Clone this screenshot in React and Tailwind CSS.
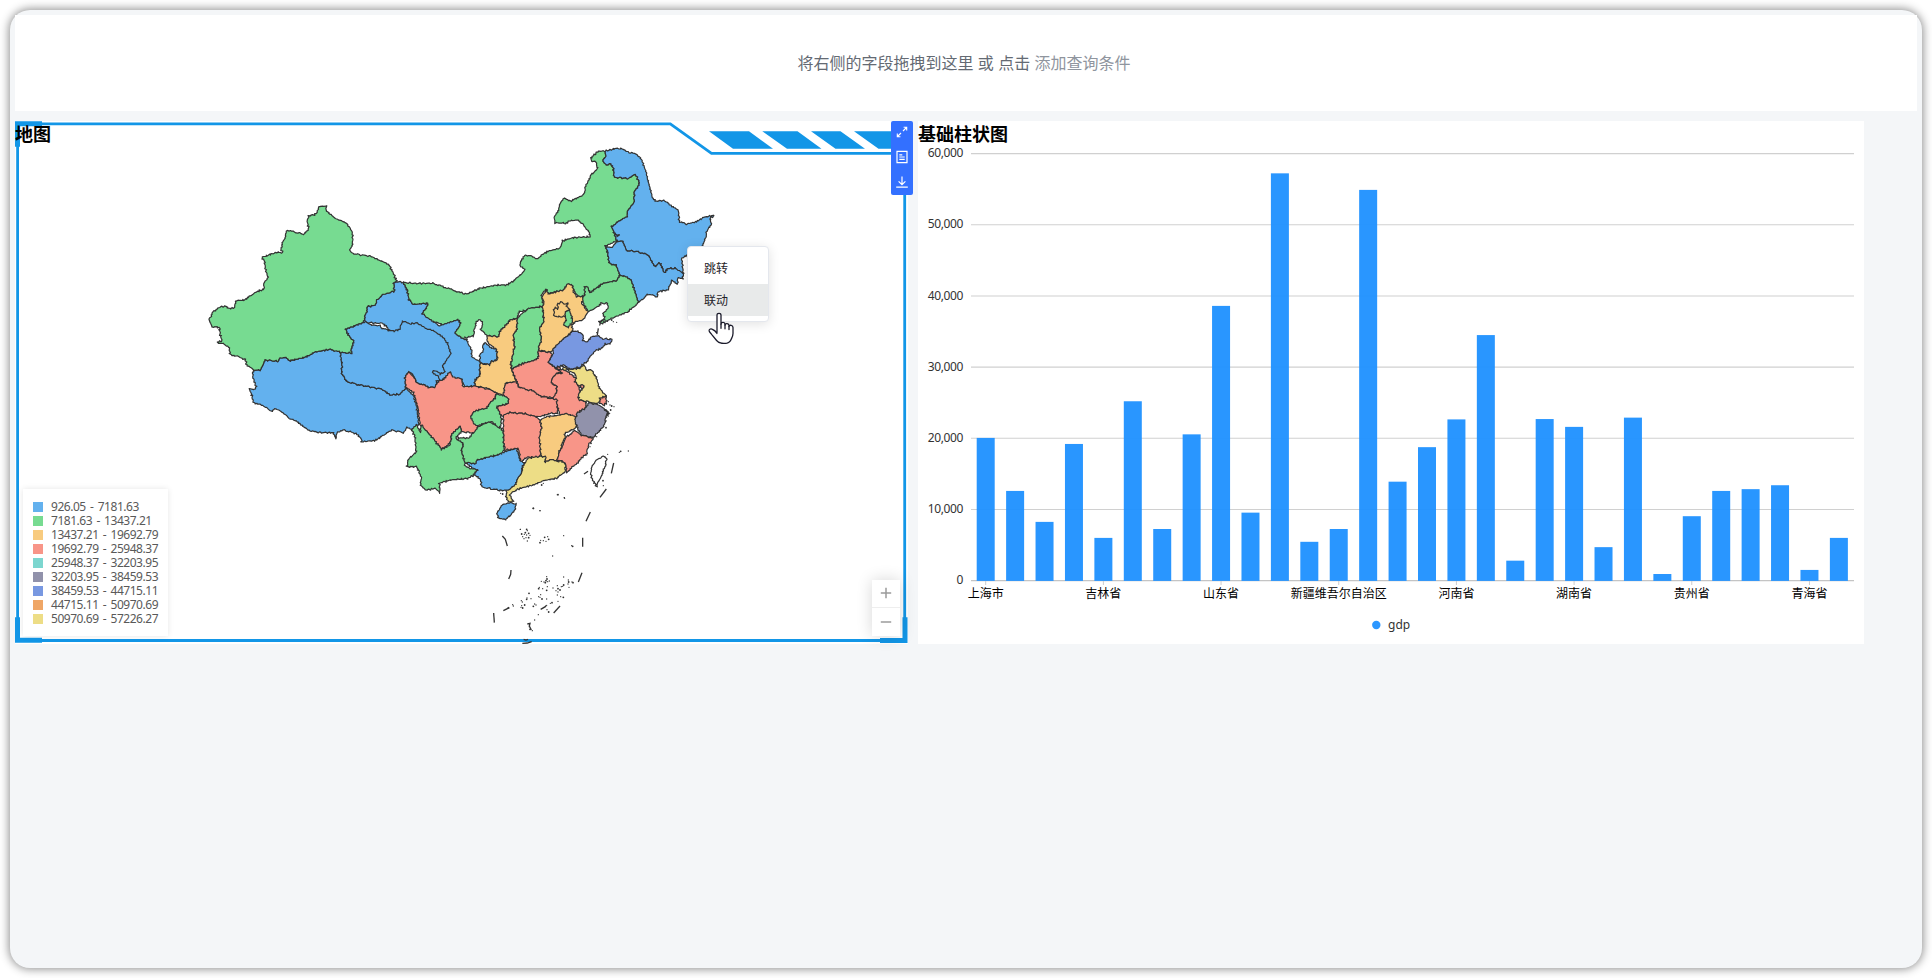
import React from "react";

/* ---------- map geometry ---------- */

const seg = (ox, oy) => (text) =>
  text.trim().split(/\s+/).map((p) => {
    const [x, y] = p.split(",").map(Number);
    return [ox + x / 3, oy + y / 3];
  });

const west = seg(200, 190);
const mid = seg(400, 270);
const north = seg(520, 140);
const south = seg(460, 330);
const sea = seg(470, 480);

// Small position-dependent offset that gives borders their natural roughness.
const rough = ([x, y]) => [
  x + 0.5 * Math.sin(x * 1.9 + y * 1.3) + 0.4 * Math.sin(y * 2.7 - x * 0.8),
  y + 0.5 * Math.sin(x * 1.4 - y * 2.1) + 0.4 * Math.cos(x * 2.9 + y * 0.7),
];

const outline = (pts) => {
  const out = [];
  pts.forEach((a, i) => {
    const b = pts[(i + 1) % pts.length];
    const n = Math.max(1, Math.round(Math.hypot(b[0] - a[0], b[1] - a[1]) / 1.3));
    for (let k = 0; k < n; k++) {
      const q = rough([a[0] + ((b[0] - a[0]) * k) / n, a[1] + ((b[1] - a[1]) * k) / n]);
      out.push(q[0].toFixed(1) + "," + q[1].toFixed(1));
    }
  });
  return out.join(" ");
};

const BLUE = "#63b1ee";
const GREEN = "#77db91";
const ORANGE = "#f8cb7f";
const RED = "#f89588";
const SLATE = "#9192ab";
const INDIGO = "#7898e1";
const YELLOW = "#eddd86";

const regions = [
  [BLUE, [
    ...west("583,302 581,280 590,275 610,277 625,310 627,330 640,343 680,338 683,350 668,370 690,385 720,408 740,390 775,388"),
    ...mid("181,160 165,190 185,205 200,208 205,222 215,240 215,262 240,272 240,295 238,320 225,330 225,348 195,352 185,330 155,322 150,305 135,325 110,345 90,320 -50,160"),
    ...west("490,398 503,350 525,345 530,330 550,313 570,308"),
  ]],
  [GREEN, [
    ...west("610,277 640,280 700,280 740,293 780,308"),
    ...mid("200,72 240,55 290,45 320,45 345,30 375,0"),
    ...north("0,375 10,347 30,347 50,357 80,335 118,325 128,302 160,293 210,290 208,278 190,255 175,240 150,242 140,250 105,248 103,235 130,173 150,184 190,165 200,130 213,105 232,85 228,65 215,63 213,55 235,33 255,33 258,50 248,62 260,75 272,70 280,85 283,112 325,115 345,103 358,125 355,135 343,160 342,190 325,210 320,235 302,240 275,260 285,285 290,303 256,318 262,335 268,370 288,375 300,405 290,422 250,430 210,458 200,440 195,465 185,478 165,460 155,433 140,435 130,450 80,462 78,448 65,465 70,498 60,500 20,510"),
    ...mid("360,125 350,145 330,150 300,185 295,200 262,197 242,180 248,160 240,148 230,155 225,170 220,198 185,205 165,190 181,160 175,148 155,155 125,165 85,145 68,130 80,115 83,100 40,103 27,90 22,60"),
  ]],
  [BLUE, west("160,540 180,540 197,510 235,514 240,504 260,503 270,512 320,500 345,486 390,478 425,487 426,520 425,550 440,574 480,585 545,597 570,615 600,612 618,595 640,615 650,650 656,700 640,718 620,713 612,728 575,720 525,752 485,755 482,742 468,730 428,720 412,728 407,745 400,728 362,728 342,725 320,718 300,700 285,690 270,688 240,660 222,657 215,665 200,652 160,636 155,615 148,597 164,598 168,588 158,560")],
  [GREEN, west("590,273 580,250 567,225 540,212 518,200 455,190 450,180 458,160 457,125 440,100 425,92 408,88 398,80 385,66 378,62 380,48 355,50 352,68 342,74 325,78 322,95 326,120 310,132 285,127 262,120 248,160 242,178 249,188 230,187 185,202 193,210 197,240 204,262 193,275 191,297 165,308 133,330 110,332 100,355 82,355 80,348 62,350 38,366 32,380 26,386 36,410 58,412 60,430 66,452 52,457 70,462 88,475 90,492 136,508 140,525 160,540 180,540 197,510 235,514 240,504 260,503 270,512 320,500 345,486 390,478 420,487 455,490 453,475 463,455 445,435 437,418 490,398 503,350 525,345 530,330 550,313 570,308 583,302 581,280")],
  [BLUE, west("437,418 490,398 500,395 515,405 540,407 545,415 580,424 600,418 607,393 630,402 652,398 680,415 720,433 742,458 752,490 740,512 728,530 735,545 722,552 712,543 700,543 698,550 715,560 722,575 710,570 708,592 690,592 650,578 640,556 628,547 615,560 618,595 600,612 570,615 545,597 480,585 440,574 425,550 426,520 420,487 455,490 453,475 463,455 445,435")],
  [BLUE, mid("240,278 240,262 238,255 250,245 248,225 256,218 270,230 290,240 292,270 272,275 270,285")],
  [BLUE, north("255,33 290,25 308,27 330,38 350,42 365,60 378,95 385,125 398,175 410,183 435,182 455,200 475,210 478,245 500,252 530,245 550,232 583,226 570,235 575,255 562,268 555,300 545,320 500,345 485,356 490,400 480,402 465,385 445,385 432,398 420,368 405,380 395,365 385,345 350,335 320,332 308,305 290,303 285,285 275,260 302,240 320,230 325,210 342,190 343,160 355,135 358,125 345,103 325,115 283,112 280,85 272,70 260,75 248,62 258,50")],
  [BLUE, north("256,318 275,322 290,303 308,305 320,332 350,335 385,345 395,365 405,380 420,368 432,398 445,385 465,385 490,402 488,418 474,412 472,435 455,418 445,450 415,455 412,470 385,462 370,475 355,488 345,455 332,418 318,412 300,405 288,375 268,370 262,335")],
  [GREEN, north("300,405 318,412 332,418 345,455 355,488 325,515 300,525 275,535 240,553 238,545 255,535 248,520 265,505 262,490 245,490 225,505 205,515 190,490 185,478 195,465 193,440 203,442 210,458 250,430 290,422")],
  [GREEN, mid("350,145 370,128 385,115 410,112 432,110 430,130 432,155 418,175 425,205 415,240 415,265 400,272 370,280 335,296 332,280 343,230 340,195 350,175")],
  [ORANGE, mid("425,80 440,58 445,72 490,60 500,42 518,45 520,65 530,80 550,78 545,100 563,125 548,150 525,155 515,165 518,180 500,200 485,210 460,240 450,247 415,240 425,205 418,175 432,155 428,110 432,95")],
  [ORANGE, mid("462,125 464,112 474,116 472,104 485,95 494,102 505,100 500,110 508,118 500,125 495,140 475,140 463,138")],
  [GREEN, mid("495,135 498,125 508,120 515,140 518,158 505,172 490,162 498,150")],
  [ORANGE, mid("262,197 295,200 300,185 330,150 352,145 350,175 340,195 343,230 332,285 335,300 350,335 315,340 318,355 310,378 290,368 262,355 225,348 225,330 240,318 240,280 270,285 272,275 292,270 290,240 270,225 260,210")],
  [RED, mid("415,242 450,247 458,255 445,280 462,290 480,292 485,305 470,310 455,325 460,345 470,350 468,385 420,378 400,362 360,358 350,335 335,297 370,280 400,272 415,265")],
  [RED, mid("465,295 490,300 505,305 530,325 535,345 540,365 538,385 560,398 555,415 530,430 528,445 500,435 480,435 470,400 458,385 470,370 470,350 455,340 455,325 470,310 488,310")],
  [YELLOW, mid("487,288 510,298 540,295 552,285 560,300 575,300 590,325 598,355 617,375 618,385 605,385 590,402 565,395 538,390 535,380 540,365 552,350 535,345 525,335 530,325 523,308 505,300 490,300")],
  [RED, mid("541,346 549,343 553,352 546,357 540,353")],
  [INDIGO, mid("460,238 485,210 500,200 518,182 540,187 550,195 548,210 560,215 575,200 595,197 610,206 635,208 630,222 615,222 605,235 590,240 570,258 560,275 548,285 540,292 510,298 490,285 470,292 445,278 458,258")],
  [RED, mid("600,385 617,378 620,400 612,405 600,400")],
  [RED, mid("315,340 350,335 355,350 380,360 400,362 420,378 450,385 470,388 473,430 450,430 420,440 405,440 380,432 360,430 330,428 310,440 290,425 290,410 325,400 325,385 310,378")],
  [RED, mid("310,435 330,428 360,430 380,432 405,440 420,450 425,475 420,500 422,555 408,565 385,560 362,575 355,535 315,540 310,510 310,480")],
  [ORANGE, mid("420,450 440,440 480,435 500,430 525,440 532,460 525,475 495,490 495,505 485,525 470,575 455,570 432,577 422,550 418,500 425,475")],
  [SLATE, mid("565,398 600,405 612,415 625,430 618,440 612,470 590,490 580,503 545,495 535,480 525,455 530,430 555,415")],
  [RED, mid("525,480 545,495 580,505 565,525 560,550 530,580 500,607 495,578 470,570 485,530 500,500 515,490")],
  [YELLOW, mid("405,560 422,560 440,560 432,577 455,568 470,575 485,572 497,585 495,605 470,625 430,632 400,645 360,655 340,665 330,675 340,695 325,695 318,680 320,660 345,645 362,610 375,578 385,565")],
  [BLUE, mid("195,578 210,578 225,582 230,570 270,560 300,552 315,545 350,535 362,575 372,578 362,610 345,645 325,660 305,662 265,655 245,650 242,630 220,612 235,600 210,590")],
  [RED, mid("15,320 25,307 40,318 50,338 90,352 105,352 115,335 135,325 150,305 158,320 185,328 190,350 225,348 262,357 290,368 285,385 270,400 262,415 222,425 212,440 235,465 228,490 185,485 180,468 155,495 150,520 125,538 110,522 95,500 75,480 60,465 55,420 45,380 38,365 18,355")],
  [GREEN, mid("35,480 50,465 60,485 65,465 80,485 95,500 125,538 150,525 155,495 180,468 185,485 168,505 190,515 185,545 195,570 195,590 228,600 220,615 205,625 150,630 118,640 120,668 105,655 80,660 60,645 65,625 50,590 20,590 25,570 48,545 45,500")],
  [GREEN, mid("195,578 185,545 190,520 170,510 175,503 205,505 225,485 235,470 265,455 300,470 310,485 312,540 300,552 270,560 230,570 225,582 210,578")],
  [GREEN, mid("290,370 325,385 325,400 290,410 300,430 305,450 300,475 275,455 250,460 235,468 222,462 212,440 222,425 240,418 262,415 270,400 285,385")],
  [BLUE, south("110,548 125,525 148,518 170,522 165,538 150,558 135,570 115,562")],
  ["#ffffff", south("392,425 398,408 410,390 430,378 440,385 435,410 425,435 415,455 410,470 403,458 395,445")],
];

const strokes = [
  sea("97,168 106,178 112,198"), sea("123,270 122,283 116,297"), sea("71,399 73,428"),
  sea("361,96 348,124"), sea("338,173 338,200"), sea("336,278 325,306"),
  sea("270,378 251,399"), sea("409,27 390,52"), south("461,399 454,430"),
  sea("161,478 168,480 174,478"), sea("157,490 172,489 185,485"), sea("172,432 180,430 178,438 184,450"),
  north("238,548 250,540 256,538"), north("232,585 235,565"), south("372,432 384,424"),
  sea("212,388 226,380 229,376"), sea("100,392 112,386 116,382"), mid("612,420 624,425 620,435 628,430"),
];

const dots = [
  ...sea("264,44 283,53 284,55 190,85 210,92 151,148 155,162 158,170 163,163 166,158 170,165 172,152 176,160 180,166 168,173 176,173 172,183 162,176 210,188 212,181 220,182 224,172 228,184 233,170 236,178 281,167 305,197 308,199 248,228"),
  ...sea("230,290 231,297 214,304 222,306 228,302 233,305 238,303 226,308 281,291 295,300 296,306 294,312 306,306 309,308 297,322 208,322 206,326 218,326 232,320 230,331 249,324 262,317 264,326 258,332 264,336 270,330 274,320 278,319 281,315 262,345 272,350 280,352 206,350 210,352 216,357 230,357 212,344 177,340 171,354 183,356 170,358 154,362 157,366 164,375 155,377 153,382 158,384 128,374 130,378 116,384 194,372 198,375 190,379 230,376 241,370 246,368 264,364 231,389 236,396 205,404 194,420 180,448 187,452 178,440"),
  ...north("275,540 280,545 290,547 262,543 230,578"),
  ...south("478,367 482,364 505,363 443,373 429,452 430,467 122,490 128,492 292,494 313,503 220,535 240,542 181,598 200,598 445,215 450,225 455,228 462,230 446,248 442,244 449,250 445,258 452,240 440,262 438,272 438,293 405,318 410,320 393,340 390,350 380,375 245,465 250,460"),
];

function ProvinceMap() {
  return (
    <svg className="absolute inset-0 h-full w-full overflow-visible" viewBox="15 121 893 523">
      <g stroke="#333" strokeWidth="1.2" strokeLinejoin="round">
        {regions.map(([fill, pts], i) => (
          <polygon key={i} fill={fill} points={outline(pts)} />
        ))}
      </g>
      <polyline points={north("285,282 292,286 299,284 290,290").join(" ")} fill="none" stroke="#333" strokeWidth="1.6" />
      <g fill="none" stroke="#333" strokeWidth="1.3">
        {strokes.map((pts, i) => (
          <polyline key={i} points={pts.join(" ")} />
        ))}
      </g>
      <g fill="#333">
        {dots.map(([x, y], i) => (
          <circle key={i} cx={x} cy={y} r={i % 3 === 0 ? 0.9 : 0.65} />
        ))}
      </g>
    </svg>
  );
}

function Frame() {
  return (
    <svg className="pointer-events-none absolute inset-0 h-full w-full" viewBox="15 121 893 523">
      <g fill="none" stroke="#1296e7" strokeWidth="2.8">
        <path d="M17.6 123.9H670.3L711.5 153.4H904.7V640.5H17.6Z" />
        <path strokeWidth="5" d="M17.5 146.7V123.7H42M17.5 617.3V640.3H42M880 640.4H905V617.3" />
      </g>
      <path
        fill="#1296e7"
        d="M709 131.2H749L773 148.8H733ZM762.3 131.2H797.5L821.5 148.8H787ZM811 131.2H840.5L865 148.8H835.5ZM854 131.2H908V148.8H878.5Z"
      />
    </svg>
  );
}

/* ---------- map panel ---------- */

const ranges = [
  [BLUE, "926.05 - 7181.63"],
  [GREEN, "7181.63 - 13437.21"],
  [ORANGE, "13437.21 - 19692.79"],
  [RED, "19692.79 - 25948.37"],
  ["#7cd6cf", "25948.37 - 32203.95"],
  [SLATE, "32203.95 - 38459.53"],
  [INDIGO, "38459.53 - 44715.11"],
  ["#efa666", "44715.11 - 50970.69"],
  [YELLOW, "50970.69 - 57226.27"],
];

function Legend() {
  return (
    <ul className="absolute bottom-2 left-2 flex h-[147px] w-[145px] flex-col justify-center bg-white pl-2.5 shadow-[0_0_6px_rgba(0,0,0,0.1)]">
      {ranges.map(([color, label]) => (
        <li key={label} className="flex h-3.5 items-center gap-2">
          <span className="h-2.5 w-2.5" style={{ backgroundColor: color }} />
          <span className="font-['Noto_Sans','Noto_Sans_CJK_SC',sans-serif] text-[12px] leading-[14px] tracking-[-0.46px] [word-spacing:1.6px] whitespace-nowrap text-[#595959]">
            {label}
          </span>
        </li>
      ))}
    </ul>
  );
}

function ZoomControl() {
  return (
    <div className="absolute right-2 bottom-2 flex w-7 flex-col gap-px bg-[#eeeeee] shadow-[0_0_16px_rgba(0,0,0,0.16)]">
      <button className="flex h-[27px] items-center justify-center bg-white pb-px">
        <svg className="h-3 w-3" viewBox="0 0 12 12" stroke="#9b9b9b" strokeWidth="1.5">
          <path d="M6 .8v10.4M.8 6h10.4" />
        </svg>
      </button>
      <button className="flex h-7 items-center justify-center bg-white">
        <svg className="h-3 w-3" viewBox="0 0 12 12" stroke="#9b9b9b" strokeWidth="1.5">
          <path d="M.8 6h10.4" />
        </svg>
      </button>
    </div>
  );
}

function ContextMenu() {
  return (
    <div className="absolute top-[125px] left-[672px] w-[82px] rounded border border-[#e4e7ed] bg-white py-[5px] text-[12px] leading-[31px] text-[#1f2329] shadow-[0_2px_12px_rgba(0,0,0,0.12)]">
      <div className="h-8 px-4">跳转</div>
      <div className="h-8 bg-[#e8eaea] px-4">联动</div>
    </div>
  );
}

function HandCursor() {
  return (
    <svg className="absolute top-[191px] left-[693px] h-8 w-7" viewBox="0 0 28 32" fill="#fff" stroke="#1b1b2b" strokeWidth="1.3" strokeLinejoin="round" strokeLinecap="round">
      <path d="M9 20.5V3.2C9 .8 13 .8 13 3.2V12.2C13.2 9.8 17 10 17 12.2V13C17.4 11 21 11.4 21 13.6V14.4C21.6 12.6 25 13 25 15.4V21.5C25 24 24 25.5 23.2 27.2C22 30.5 20 31.5 16 31.5C12 31.5 10.2 30.5 8.6 28.5L3.8 22.6C3 21.5 1.6 20.6 1.2 19C.9 17.5 2.4 16.4 4 17.2C5.5 17.8 7.6 19 9 21.5" />
      <path fill="none" d="M13 12.2V16.3M17 13V16.8M21 14.4V17.6" />
    </svg>
  );
}

function Toolbar() {
  return (
    <div className="absolute top-0 -right-[5px] flex h-[74px] w-[22px] flex-col items-center rounded-[2px] bg-[#3370ff]">
      <button className="flex h-[22px] items-center justify-center">
        <svg className="h-3 w-3" viewBox="0 0 12 12" fill="none" stroke="#fff" strokeWidth="1.1">
          <path d="M7.6 1.3h3.1v3.1M10.5 1.5L7 5M4.4 10.7H1.3V7.6M1.5 10.5L5 7" />
        </svg>
      </button>
      <button className="flex h-7 items-center justify-center">
        <svg className="h-[14px] w-3" viewBox="0 0 12 14" fill="none" stroke="#fff" strokeWidth="1.2">
          <path d="M1 1.3h10v11.4H1zM3.3 4.8h3M3.3 7h5.4M3.3 9.3h5.4" />
        </svg>
      </button>
      <button className="flex h-[22px] items-center justify-center">
        <svg className="h-3 w-3" viewBox="0 0 12 12" fill="none" stroke="#fff" strokeWidth="1.2">
          <path d="M6 .5v8M2.6 5.4L6 8.7l3.4-3.3M.2 11.1h11.6" />
        </svg>
      </button>
    </div>
  );
}

function MapPanel() {
  return (
    <section className="relative h-[523px] w-[893px] bg-white">
      <Frame />
      <h2 className="relative text-[18px] leading-[25px] font-bold text-black">地图</h2>
      <ProvinceMap />
      <Legend />
      <ZoomControl />
      <Toolbar />
      <ContextMenu />
      <HandCursor />
    </section>
  );
}

/* ---------- chart panel ---------- */

const gdp = [
  20050, 12600, 8250, 19200, 6000, 25200, 7250, 20550, 38600, 9550, 57226, 5450, 7250, 54900, 13900,
  18750, 22650, 34500, 2800, 22700, 21600, 4700, 22900, 926, 9050, 12600, 12850, 13400, 1500, 6000,
];
const ticks = [60000, 50000, 40000, 30000, 20000, 10000, 0];
const names = ["上海市", "吉林省", "山东省", "新疆维吾尔自治区", "河南省", "湖南省", "贵州省", "青海省"];

function BarChart() {
  const y = (v) => 459.6 - (v * 427) / 60000;
  const x = (i) => 67.7 + i * 29.42;
  return (
    <svg className="absolute inset-0 h-full w-full font-['Noto_Sans','Noto_Sans_CJK_SC',sans-serif]" viewBox="0 0 946 523">
      {ticks.map((t) => (
        <g key={t}>
          <path d={`M53 ${y(t)}H936`} stroke={t ? "#d0d0d0" : "#c4c4c4"} strokeWidth="1.1" />
          <text x="45" y={y(t) + 3.6} textAnchor="end" fontSize="12" letterSpacing="-0.4" fill="#333">
            {t.toLocaleString("en-US")}
          </text>
        </g>
      ))}
      {gdp.map((v, i) => (
        <rect key={i} x={x(i) - 9} y={y(v)} width="18" height={459.9 - y(v)} fill="#1e90ff" fillOpacity="0.95" />
      ))}
      {names.map((n, i) => (
        <g key={n}>
          <path d={`M${x(i * 4)} 460V464`} stroke="#ccc" />
          <text x={x(i * 4)} y="477" textAnchor="middle" fontSize="12" fill="#000">{n}</text>
        </g>
      ))}
      <circle cx="458.3" cy="504" r="4.2" fill="#2b97ff" />
      <text x="470" y="507.5" fontSize="12" fill="#333">gdp</text>
    </svg>
  );
}

function ChartPanel() {
  return (
    <section className="relative h-[523px] w-[946px] bg-white">
      <h2 className="text-[18px] leading-[25px] font-bold text-black">基础柱状图</h2>
      <BarChart />
    </section>
  );
}

export default function App() {
  return (
    <div className="h-[978px] w-full overflow-hidden bg-white p-2.5 font-['Noto_Sans_CJK_SC',sans-serif]">
      <main className="flex h-[958px] w-[1912px] flex-col gap-2.5 rounded-[20px] bg-[#f4f6f8] p-[5px] shadow-[0_0_10px_1px_rgba(0,0,0,0.45)]">
        <header className="flex h-24 items-center justify-center bg-white pb-0.5 text-[16px] leading-6 text-[#646a73]">
          <p className="-ml-1 whitespace-pre [word-spacing:0.8px]">
            将右侧的字段拖拽到这里 或 点击 <span className="text-[#8f959e]">添加查询条件</span>
          </p>
        </header>
        <div className="flex gap-2.5">
          <MapPanel />
          <ChartPanel />
        </div>
      </main>
    </div>
  );
}
